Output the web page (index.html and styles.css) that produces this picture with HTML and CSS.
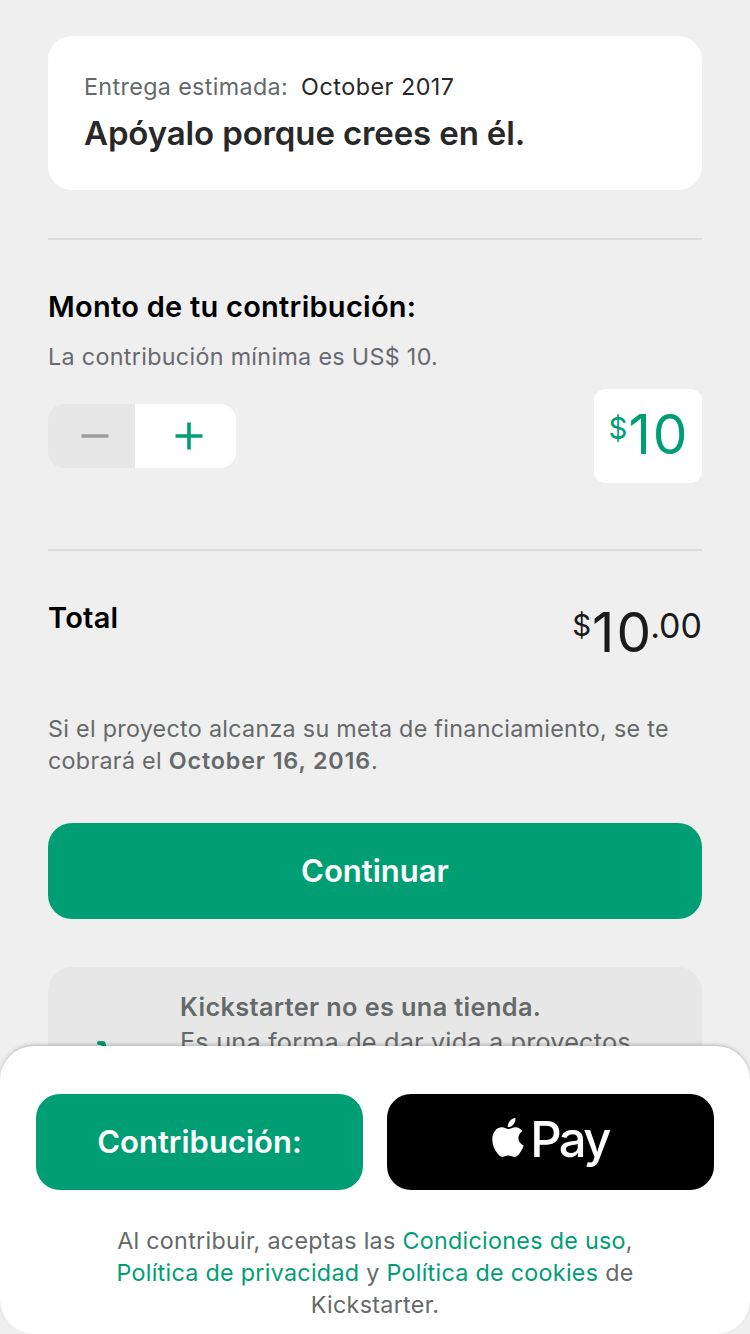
FILE: index.html
```html
<!DOCTYPE html>
<html lang="es">
<head>
<meta charset="utf-8">
<title>Contribución</title>
<link rel="stylesheet" href="styles.css">
</head>
<body>
<main class="screen">
  <section class="reward">
    <p class="reward-date"><span class="small label">Entrega estimada:</span><span class="small date">October 2017</span></p>
    <h1 class="reward-title">Apóyalo porque crees en él.</h1>
  </section>
  <section class="amount">
    <h2 class="heading">Monto de tu contribución:</h2>
    <p class="small minimum">La contribución mínima es US$ 10.</p>
    <div class="amount-row">
      <div class="stepper">
        <button class="step minus" aria-label="Menos"><svg width="28" height="28" viewBox="0 0 28 28"><path d="M.5 14h27" stroke="#9b9e9e" stroke-width="3.6"/></svg></button>
        <button class="step plus" aria-label="Más"><svg width="28" height="28" viewBox="0 0 28 28"><path d="M.5 14h27M14 .5v27" stroke="#009e74" stroke-width="3.6"/></svg></button>
      </div>
      <div class="value"><span class="currency">$</span><span class="units">10</span></div>
    </div>
  </section>
  <section class="total">
    <h2 class="heading">Total</h2>
    <div class="total-value"><span class="currency">$</span><span class="units">10</span><span class="cents">.00</span></div>
  </section>
  <p class="small notice">Si el proyecto alcanza su meta de financiamiento, se te<br>cobrará el <b>October 16, 2016</b>.</p>
  <button class="button continue">Continuar</button>
  <section class="info">
    <svg class="info-icon" width="60" height="60" viewBox="0 0 60 60"><path d="M17 3q0-2 2-2h4q2 0 2.500 2l2 8h-5l-1.500-6H19q-2 0-2-2z" fill="#009e74"/></svg>
    <p class="info-text"><b>Kickstarter no es una tienda.</b><br>Es una forma de dar vida a proyectos</p>
  </section>
</main>
<footer class="sheet">
  <div class="actions">
    <button class="button pledge">Contribución:</button>
    <button class="button pay" aria-label="Apple Pay">
      <svg class="apple" width="32" height="40" viewBox="0 0 32 40"><path d="M23.4 0c.3 2.400-.6 4.700-2 6.400-1.400 1.700-3.600 2.900-5.600 2.700-.3-2.300.8-4.700 2.100-6.200C19.300 1.200 21.600.1 23.400 0zM30.400 13.300c-2.500 1.600-4 3.900-4 6.700 0 3.500 2.200 6.300 5.300 7.500-.9 2.900-2.300 5.400-4.200 8-1.500 2.100-3.100 3.400-5.100 3.400-2.200 0-3.200-1.300-6-1.300-2.900 0-4 1.300-6.100 1.300-2 0-3.600-1.600-5.200-3.900C2.300 31.200.3 26.300.3 21.400c0-7.600 4.700-12.100 9.700-12.100 2.600 0 4.800 1.800 6.500 1.800 1.600 0 4.100-1.900 7.100-1.900 2.300 0 5 1 6.800 4.100z" fill="#fff"/></svg><span class="pay-word">Pay</span>
    </button>
  </div>
  <p class="small legal">Al contribuir, aceptas las <a>Condiciones de uso</a>,<br><a>Política de privacidad</a> y <a>Política de cookies</a> de<br>Kickstarter.</p>
</footer>
</body>
</html>
```
FILE: styles.css
```css
* { box-sizing: border-box; margin: 0; padding: 0; }
body {
  width: 750px;
  height: 1334px;
  overflow: hidden;
  position: relative;
  background: #efefef;
  color: #282828;
  font-family: Inter, "Liberation Sans", sans-serif;
}
button { border: 0; font: inherit; }
b { font-weight: 600; }
.screen { display: flex; flex-direction: column; padding: 36px 48px 0; }
.small { font-size: 23.3px; line-height: 32px; letter-spacing: .29px; color: #656969; }
.reward { height: 154px; padding: 35px 36px 0; border-radius: 24px; background: #fff; }
.reward-date { display: flex; gap: 13px; }
.small.label { letter-spacing: .36px; }
.small.date { letter-spacing: .52px; color: #282828; }
.reward-title { margin-top: 10px; font-size: 33px; font-weight: 600; line-height: 40px; letter-spacing: -.13px; }
.amount { margin-top: 48px; padding-top: 49px; border-top: 2px solid #dcdcdc; }
.heading { font-size: 29px; font-weight: 600; line-height: 36px; letter-spacing: .26px; color: #000; }
.minimum { margin-top: 16px; letter-spacing: .32px; color: #68696f; }
.amount-row { display: flex; justify-content: space-between; align-items: center; margin-top: 16px; height: 94px; }
.stepper { display: flex; width: 188px; height: 64px; border-radius: 16px; overflow: hidden; }
.step { display: flex; align-items: center; justify-content: center; }
.minus { width: 87px; padding-left: 7px; background: #e7e7e7; }
.plus { flex: 1; padding-left: 7px; background: #fff; }
.value { display: flex; justify-content: center; width: 108px; height: 94px; border-radius: 12px; background: #fff; color: #009e74; line-height: 90px; }
.currency { margin-right: 1px; font-size: 29.5px; }
.units { margin-right: -2px; font-size: 55px; letter-spacing: 2px; }
.value .currency { line-height: 79px; }
.total { display: flex; justify-content: space-between; margin-top: 66px; padding-top: 49px; border-top: 2px solid #dcdcdc; height: 164px; }
.total-value { display: flex; line-height: 64px; color: #1b1b1b; }
.total-value .currency, .cents { line-height: 51px; }
.cents { font-size: 34px; margin-left: -1px; }
.notice b { letter-spacing: .85px; }
.continue { margin-top: 46px; }
.button { display: flex; align-items: center; justify-content: center; height: 96px; padding-bottom: 2px; border-radius: 24px; background: #009e74; color: #fff; font-size: 31px; font-weight: 600; }
.info { display: flex; margin-top: 48px; height: 200px; padding: 22px 24px; border-radius: 24px; background: #e7e7e7; color: #656969; font-size: 25.3px; line-height: 35px; }
.info-icon { flex: none; margin: 51px 48px 0 8px; }
.info-text { margin-left: -8px; white-space: nowrap; letter-spacing: .16px; }
.info-text b { letter-spacing: .37px; }
.sheet { position: absolute; left: 0; top: 1046px; width: 750px; height: 288px; padding: 48px 36px 0; border-radius: 34px; background: #fff; box-shadow: 0 -2px 4px -1px rgba(0,0,0,.25); }
.actions { display: flex; gap: 24px; }
.actions .button { flex: 1; }
.actions .pay { padding-bottom: 6px; background: #000; }
.apple { margin: -2px 6px 0 0; }
.pay-word { font-size: 49px; font-weight: 500; letter-spacing: -2.6px; }
.legal { margin-top: 35px; text-align: center; }
.legal a { color: #009e74; }
```
